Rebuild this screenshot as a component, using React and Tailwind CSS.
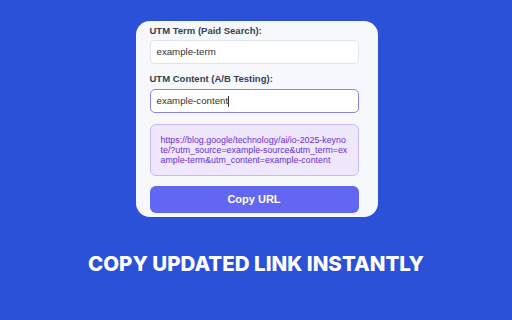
export default function App() {
  return (
    <div
      className="w-[512px] h-[320px] bg-[#2b51d9] flex flex-col items-center overflow-hidden"
      style={{ fontFamily: '"Liberation Sans", Arial, sans-serif' }}
    >
      <div className="mt-[21px] w-[242px] h-[196px] bg-[#f7f8fc] rounded-[14px] pl-[14px] pr-[19px] pt-[4px] ml-[1px] flex flex-col">
        <label className="text-[9.5px] font-bold text-[#333f55] leading-[11px]">UTM Term (Paid Search):</label>
        <div className="mt-[4px] h-[24px] rounded-[5px] border border-[#dfe3ea] bg-white flex items-center px-[6px] text-[9.7px] text-[#333]">
          example-term
        </div>
        <label className="mt-[9px] text-[9.5px] font-bold text-[#333f55] leading-[11px]">UTM Content (A/B Testing):</label>
        <div className="mt-[5px] h-[24px] rounded-[5px] border-[1.5px] border-[#8b82f0] bg-white flex items-center px-[6px] text-[9.7px] text-[#333]">
          example-content<span className="w-px h-[11px] bg-[#333]" />
        </div>
        <div className="mt-[11px] h-[52px] rounded-[6px] border border-[#c9b8f5] bg-[#efe8fc] px-[10px] pt-[10px] text-[8.85px] leading-[10px] text-[#6a2fd0] break-all">
          https://blog.google/technology/ai/io-2025-keynote/?utm_source=example-source&amp;utm_term=example-term&amp;utm_content=example-content
        </div>
        <button className="mt-[10px] h-[27px] rounded-[6px] bg-[#6366f1] text-white text-[11px] font-bold">
          Copy URL
        </button>
      </div>
      <h1
        className="mt-[35px] text-white text-[20.5px] font-extrabold tracking-normal leading-[24px]"
        style={{ fontFamily: 'Inter, "Open Sans", sans-serif' }}
      >
        COPY UPDATED LINK INSTANTLY
      </h1>
    </div>
  )
}
